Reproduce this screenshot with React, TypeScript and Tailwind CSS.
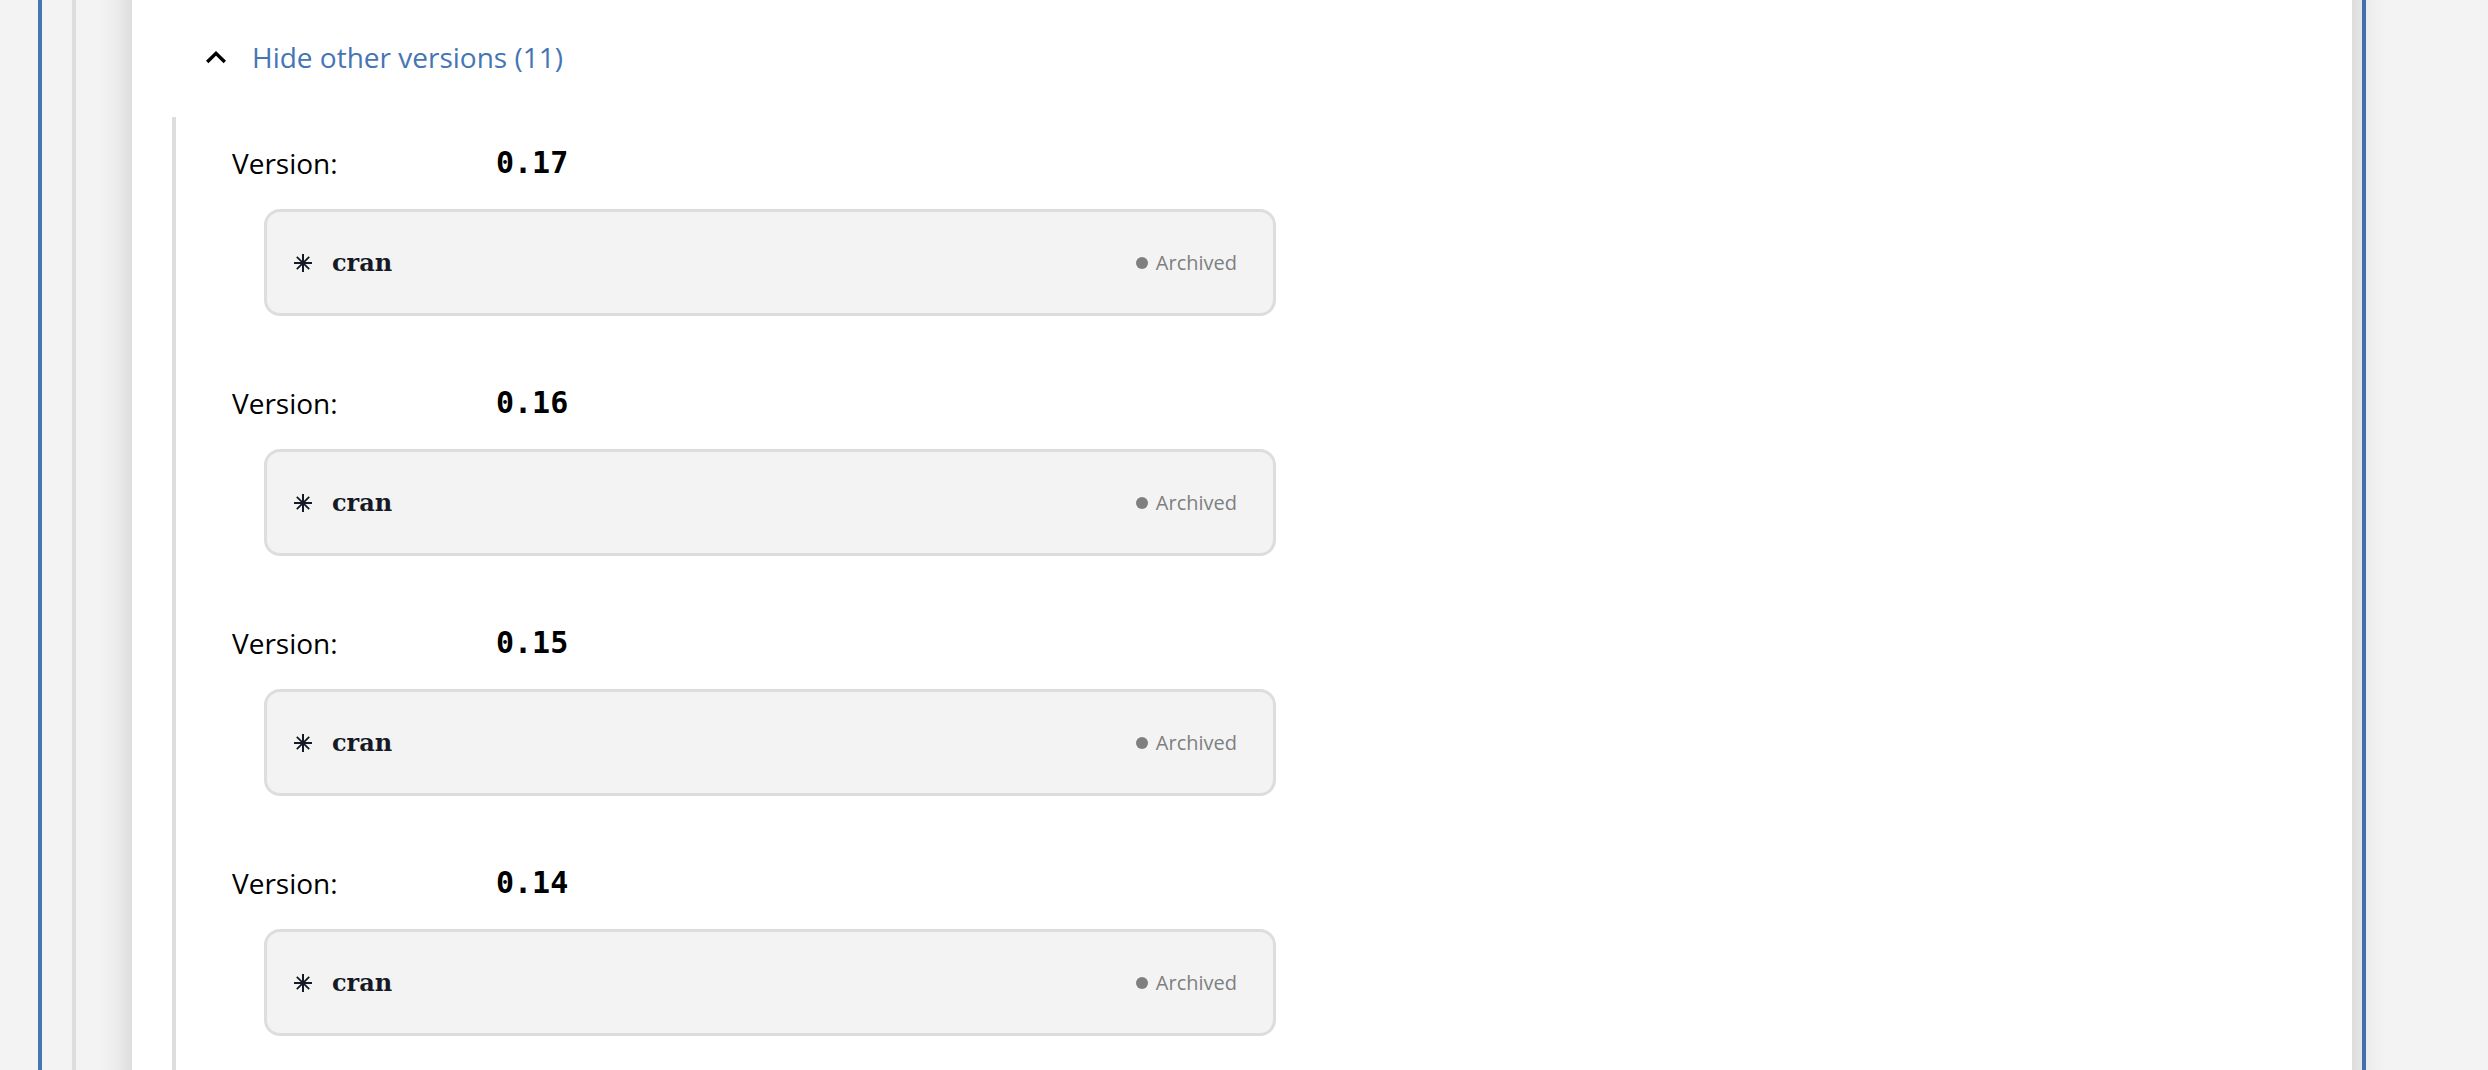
import { useState } from "react"

const TOTAL_OTHER_VERSIONS = 11

const versions = [
  { version: "0.17", source: "cran", status: "Archived" },
  { version: "0.16", source: "cran", status: "Archived" },
  { version: "0.15", source: "cran", status: "Archived" },
  { version: "0.14", source: "cran", status: "Archived" },
]

function Chevron({ open }: { open: boolean }) {
  return (
    <svg
      viewBox="0 0 20 14"
      className={open ? "w-5 h-[14px]" : "w-5 h-[14px] rotate-180"}
      fill="none"
      stroke="#000"
      strokeWidth="3.4"
      aria-hidden="true"
    >
      <path d="M1.2 12 10 3.4 18.8 12" />
    </svg>
  )
}

function Asterisk() {
  return (
    <svg viewBox="0 0 18 18" className="w-[18px] h-[18px]" fill="none" stroke="#161a26" strokeWidth="2" aria-hidden="true">
      <path d="M9 0v18M0 9h18" />
      <path d="M2.8 2.8l12.4 12.4M15.2 2.8L2.8 15.2" strokeWidth="1.8" />
      <circle cx="9" cy="9" r="2.4" fill="#161a26" stroke="none" />
    </svg>
  )
}

function VersionItem({ version, source, status }: { version: string; source: string; status: string }) {
  return (
    <li>
      <div className="flex leading-10">
        <span className="w-[264px] text-[28px]">Version:</span>
        <span className="font-['DejaVu_Sans_Mono',monospace] text-[30px] font-bold">{version}</span>
      </div>

      <div className="mt-[26px] ml-8 w-[1012px] max-w-full h-[107px] flex items-center justify-between pl-[27px] pr-9 bg-[#f3f3f3] border-3 border-[#ddd] rounded-2xl">
        <div className="flex items-center gap-5">
          <Asterisk />
          <span className="font-['DejaVu_Serif',serif] text-2xl font-bold text-[#161a26]">{source}</span>
        </div>
        <div className="flex items-center gap-2 text-xl text-[#7f7f7f]">
          <span className="w-3 h-3 rounded-full bg-[#7f7f7f]" />
          {status}
        </div>
      </div>
    </li>
  )
}

export default function App() {
  const [open, setOpen] = useState(true)

  return (
    <div className="min-h-screen flex overflow-hidden bg-[#f3f3f3] pl-[38px] pr-[122px] font-['Open_Sans',sans-serif] text-black">
      <div className="flex-1 flex border-x-4 border-[#4575b4] pl-[30px] pr-[10px]">
        <div className="flex-1 flex border-l-4 border-[#ddd] pl-14">
          <main className="flex-1 flex flex-col -my-12 pt-[85px] pb-12 pl-10 bg-white shadow-[0_0_32px_rgba(0,0,0,0.18)]">
            <button
              type="button"
              aria-expanded={open}
              onClick={() => setOpen(!open)}
              className="self-start flex items-center gap-[26px] pl-[34px] text-[28px] leading-10 text-[#4575b4] cursor-pointer"
            >
              <Chevron open={open} />
              {open ? "Hide" : "Show"} other versions ({TOTAL_OTHER_VERSIONS})
            </button>

            {open && (
              <ul className="flex-1 mt-10 flex flex-col gap-[67px] border-l-4 border-[#ddd] pt-[26px] pl-14">
                {versions.map((v) => (
                  <VersionItem key={v.version} {...v} />
                ))}
              </ul>
            )}
          </main>
        </div>
      </div>
    </div>
  )
}
